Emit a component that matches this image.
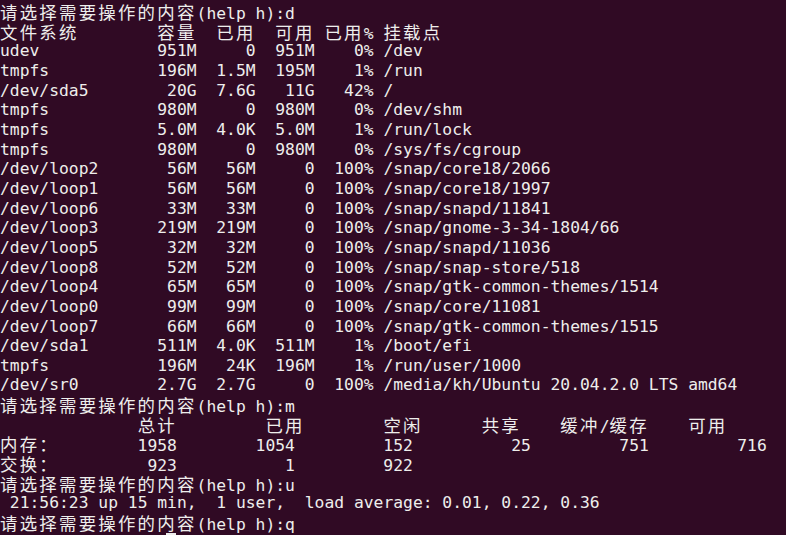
import React from "react";

const CJK = /[\u2e80-\u9fff\uff00-\uffef]/;

function Line({ text }) {
  const parts = [];
  let buf = "";
  let k = 0;
  for (const ch of text) {
    if (CJK.test(ch)) {
      if (buf) {
        parts.push(<span key={k++}>{buf}</span>);
        buf = "";
      }
      parts.push(
        <span
          key={k++}
          className="inline-block w-[19.66px] text-left text-[17.4px] font-['Noto_Sans_CJK_SC',sans-serif]"
        >
          {ch}
        </span>
      );
    } else {
      buf += ch;
    }
  }
  if (buf) parts.push(<span key={k++}>{buf}</span>);
  return <div className="h-[19.66px] whitespace-pre leading-[19.66px]">{parts}</div>;
}

const df = [
  ["udev", "951M", "0", "951M", "0%", "/dev"],
  ["tmpfs", "196M", "1.5M", "195M", "1%", "/run"],
  ["/dev/sda5", "20G", "7.6G", "11G", "42%", "/"],
  ["tmpfs", "980M", "0", "980M", "0%", "/dev/shm"],
  ["tmpfs", "5.0M", "4.0K", "5.0M", "1%", "/run/lock"],
  ["tmpfs", "980M", "0", "980M", "0%", "/sys/fs/cgroup"],
  ["/dev/loop2", "56M", "56M", "0", "100%", "/snap/core18/2066"],
  ["/dev/loop1", "56M", "56M", "0", "100%", "/snap/core18/1997"],
  ["/dev/loop6", "33M", "33M", "0", "100%", "/snap/snapd/11841"],
  ["/dev/loop3", "219M", "219M", "0", "100%", "/snap/gnome-3-34-1804/66"],
  ["/dev/loop5", "32M", "32M", "0", "100%", "/snap/snapd/11036"],
  ["/dev/loop8", "52M", "52M", "0", "100%", "/snap/snap-store/518"],
  ["/dev/loop4", "65M", "65M", "0", "100%", "/snap/gtk-common-themes/1514"],
  ["/dev/loop0", "99M", "99M", "0", "100%", "/snap/core/11081"],
  ["/dev/loop7", "66M", "66M", "0", "100%", "/snap/gtk-common-themes/1515"],
  ["/dev/sda1", "511M", "4.0K", "511M", "1%", "/boot/efi"],
  ["tmpfs", "196M", "24K", "196M", "1%", "/run/user/1000"],
  ["/dev/sr0", "2.7G", "2.7G", "0", "100%", "/media/kh/Ubuntu 20.04.2.0 LTS amd64"],
];

const prompt = "请选择需要操作的内容(help h):";

const lines = [
  prompt + "d",
  "文件系统        容量  已用  可用 已用% 挂载点",
  ...df.map(
    ([fs, s, u, a, p, m]) =>
      fs.padEnd(16) + s.padStart(4) + " " + u.padStart(5) + " " + a.padStart(5) + " " + p.padStart(5) + " " + m
  ),
  prompt + "m",
  "              总计         已用        空闲      共享    缓冲/缓存    可用",
  "内存：        1958        1054         152          25         751         716",
  "交换：         923           1         922",
  prompt + "u",
  " 21:56:23 up 15 min,  1 user,  load average: 0.01, 0.22, 0.36",
  prompt + "q",
];

export default function App() {
  return (
    <div className="relative w-[786px] h-[535px] overflow-hidden bg-[#300a24] text-[#eeeeec] font-['DejaVu_Sans_Mono',monospace] text-[16.33px]">
      <div className="pt-[2px]">
        {lines.map((t, i) => (
          <Line key={i} text={t} />
        ))}
        <div className="h-[19.66px] pl-[166px]">
          <div className="w-[10px] h-[19px] bg-[#eeeeec]" />
        </div>
      </div>
    </div>
  );
}
